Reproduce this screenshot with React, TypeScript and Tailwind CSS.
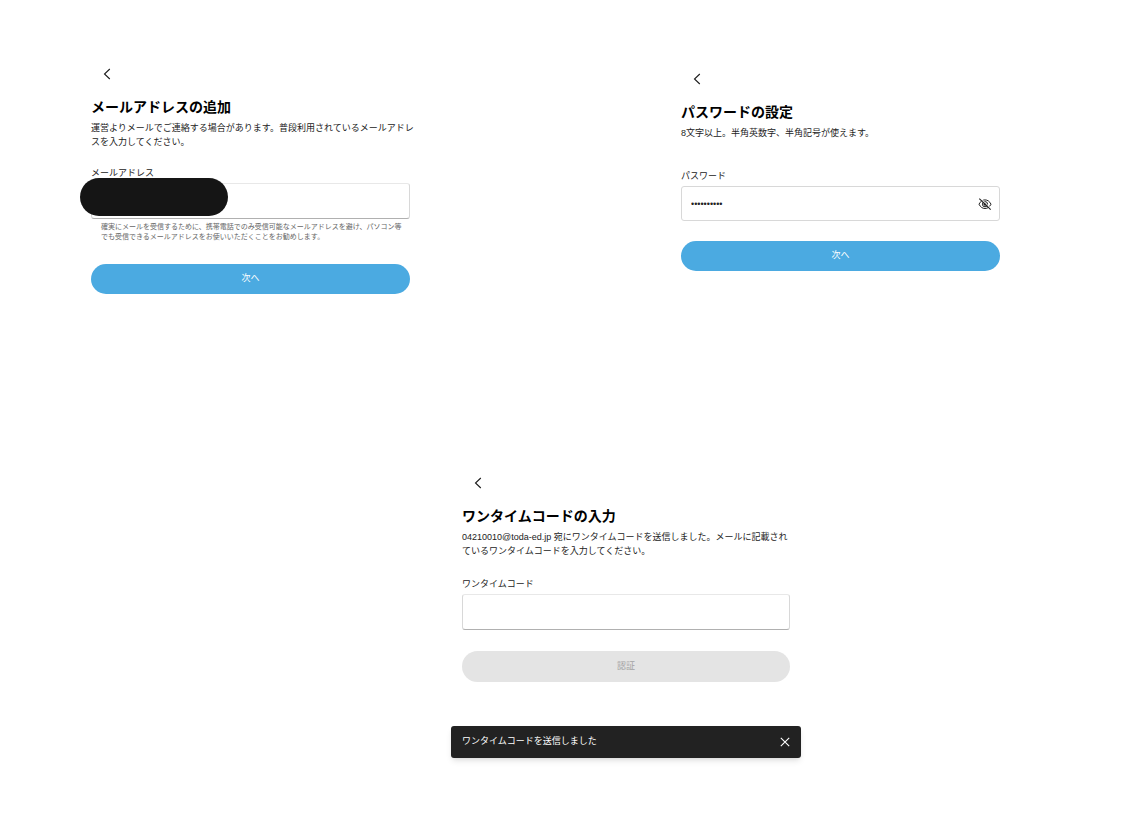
import { useState } from 'react';
import type { ComponentProps, ReactNode } from 'react';
import clsx from 'clsx';

function BackButton() {
  return (
    <button
      type="button"
      aria-label="戻る"
      className="flex h-5 w-[31px] items-center justify-center"
    >
      <svg viewBox="0 0 8 12" className="h-3 w-2" fill="none" stroke="#1c1c1c" strokeWidth="1.1">
        <path d="M6.800 1 1.500 6l5.300 5" />
      </svg>
    </button>
  );
}

function PanelHeader({ title, children }: { title: string; children: ReactNode }) {
  return (
    <header>
      <BackButton />
      <h1 className="mt-[13px] text-[14px] leading-5 font-bold text-black">{title}</h1>
      <p className="mt-1 text-[9px] leading-[14px] whitespace-nowrap">{children}</p>
    </header>
  );
}

function Field({ id, label, children }: { id: string; label: string; children: ReactNode }) {
  return (
    <div className="flex flex-col gap-[3px]">
      <label htmlFor={id} className="text-[9px] leading-[14px]">
        {label}
      </label>
      <div className="relative">{children}</div>
    </div>
  );
}

function TextInput({ className, ...props }: ComponentProps<'input'>) {
  return (
    <input
      className={clsx(
        'block w-full rounded-[3px] border border-[#d8d8d8] bg-white px-[9px] text-[9px] outline-none',
        className,
      )}
      {...props}
    />
  );
}

function SubmitButton({ className, ...props }: ComponentProps<'button'>) {
  return (
    <button
      type="submit"
      className={clsx(
        'w-full rounded-full bg-[#4baae1] text-[9px] text-white disabled:bg-[#e4e4e4] disabled:text-[#a3a3a3]',
        className,
      )}
      {...props}
    />
  );
}

function EyeOffIcon() {
  return (
    <svg viewBox="0 0 14 12" className="h-3 w-3.5" fill="none" stroke="#222" strokeWidth="1">
      <path d="M1 6.200C2.400 3.300 4.500 1.900 7 1.900s4.600 1.400 6 4.300c-1.400 2.900-3.500 4.300-6 4.300S2.400 9.100 1 6.200Z" />
      <circle cx="7" cy="6.200" r="2.600" />
      <circle cx="7" cy="6.200" r="1.100" fill="#222" />
      <path d="M2.400.2 13.300 10.700" stroke="#fff" />
      <path d="M1.300.600 12.700 11.600" strokeWidth="1.100" />
    </svg>
  );
}

function EmailPanel() {
  return (
    <form className="w-full max-w-[319px]" onSubmit={(e) => e.preventDefault()}>
      <PanelHeader title="メールアドレスの追加">
        運営よりメールでご連絡する場合があります。普段利用されているメールアドレ
        <br />
        スを入力してください。
      </PanelHeader>
      <div className="mt-[17px]">
        <Field id="email" label="メールアドレス">
          <TextInput id="email" type="email" className="h-9 border-t-[#e8e8e8] border-b-[#b0b0b0]" />
          {/* mask over the entered address */}
          <span className="absolute -top-[5px] -left-[11px] h-[38px] w-[148px] rounded-full bg-[#151515]" />
        </Field>
        <p className="mt-[3px] pl-2.5 text-[7px] leading-[10px] whitespace-nowrap text-[#666]">
          確実にメールを受信するために、携帯電話でのみ受信可能なメールアドレスを避け、パソコン等
          <br />
          でも受信できるメールアドレスをお使いいただくことをお勧めします。
        </p>
      </div>
      <SubmitButton className="mt-[22px] h-[30px]">次へ</SubmitButton>
    </form>
  );
}

function PasswordPanel() {
  const [visible, setVisible] = useState(false);

  return (
    <form className="mt-[5px] w-full max-w-[319px]" onSubmit={(e) => e.preventDefault()}>
      <PanelHeader title="パスワードの設定">
        8文字以上。半角英数字、半角記号が使えます。
      </PanelHeader>
      <div className="mt-[29px]">
        <Field id="password" label="パスワード">
          <TextInput
            id="password"
            type={visible ? 'text' : 'password'}
            defaultValue="password12"
            className="h-[35px] pr-8"
          />
          <button
            type="button"
            aria-label="パスワードを表示"
            onClick={() => setVisible(!visible)}
            className="absolute inset-y-0 right-2 flex items-center"
          >
            <EyeOffIcon />
          </button>
        </Field>
      </div>
      <SubmitButton className="mt-5 h-[30px]">次へ</SubmitButton>
    </form>
  );
}

function OneTimeCodePanel() {
  return (
    <form className="mx-[11px]" onSubmit={(e) => e.preventDefault()}>
      <PanelHeader title="ワンタイムコードの入力">
        04210010@toda-ed.jp 宛にワンタイムコードを送信しました。メールに記載され
        <br />
        ているワンタイムコードを入力してください。
      </PanelHeader>
      <div className="mt-[19px]">
        <Field id="code" label="ワンタイムコード">
          <TextInput
            id="code"
            inputMode="numeric"
            className="h-9 border-t-[#e8e8e8] border-b-[#b0b0b0]"
          />
        </Field>
      </div>
      <SubmitButton disabled className="mt-[21px] h-[31px]">
        認証
      </SubmitButton>
    </form>
  );
}

function Toast({ message }: { message: string }) {
  return (
    <div
      role="status"
      className="flex h-8 items-center justify-between rounded-[3px] bg-[#222] px-[11px] text-[9px] text-white shadow-md"
    >
      {message}
      <button type="button" aria-label="閉じる">
        <svg viewBox="0 0 10 10" className="size-2.5" fill="none" stroke="#fff" strokeWidth="1.1">
          <path d="m.8.8 8.400 8.400M9.200.800.800 9.200" />
        </svg>
      </button>
    </div>
  );
}

export default function App() {
  return (
    <main className="min-h-screen bg-white pt-16 pb-16 font-['Liberation_Sans','Noto_Sans_CJK_JP',sans-serif] text-[#222]">
      <div className="flex items-start justify-between gap-8 pr-[143px] pl-[91px]">
        <EmailPanel />
        <PasswordPanel />
      </div>
      <div className="mt-[179px] pl-[109px]">
        <div className="mx-auto w-full max-w-[350px]">
          <OneTimeCodePanel />
          <div className="mt-11">
            <Toast message="ワンタイムコードを送信しました" />
          </div>
        </div>
      </div>
    </main>
  );
}
